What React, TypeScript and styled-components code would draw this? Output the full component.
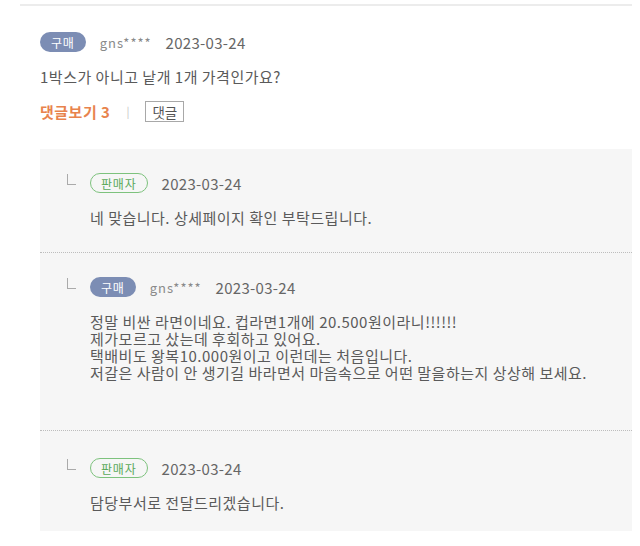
import React from 'react';
import styled, { createGlobalStyle } from 'styled-components';

const GlobalStyle = createGlobalStyle`
  body {
    margin: 0;
    background: #fff;
    font-family: "Noto Sans CJK KR", "Noto Sans", sans-serif;
    color: #555;
  }
`;

type Reply = {
  role: 'buyer' | 'seller';
  name?: string;
  date: string;
  lines: string[];
  pt: number;
  pb: number;
};

const replies: Reply[] = [
  {
    role: 'seller',
    date: '2023-03-24',
    lines: ['네 맞습니다. 상세페이지 확인 부탁드립니다.'],
    pt: 24,
    pb: 26,
  },
  {
    role: 'buyer',
    name: 'gns****',
    date: '2023-03-24',
    lines: [
      '정말 비싼 라면이네요. 컵라면1개에 20.500원이라니!!!!!!',
      '제가모르고 샀는데 후회하고 있어요.',
      '택배비도 왕복10.000원이고 이런데는 처음입니다.',
      '저갈은 사람이 안 생기길 바라면서 마음속으로 어떤 말을하는지 상상해 보세요.',
    ],
    pt: 24,
    pb: 49,
  },
  {
    role: 'seller',
    date: '2023-03-24',
    lines: ['담당부서로 전달드리겠습니다.'],
    pt: 27,
    pb: 20,
  },
];

export default function App() {
  return (
    <>
      <GlobalStyle />
      <Page>
        <Comment>
          <Meta>
            <Badge $role="buyer">구매</Badge>
            <Name>gns****</Name>
            <DateText>2023-03-24</DateText>
          </Meta>
          <Body>1박스가 아니고 낱개 1개 가격인가요?</Body>
          <Actions>
            <ViewReplies>댓글보기 3</ViewReplies>
            <Bar>|</Bar>
            <ReplyButton>댓글</ReplyButton>
          </Actions>

          <Panel>
            {replies.map((r, i) => (
              <ReplyRow key={i} $pt={r.pt} $pb={r.pb}>
                <Corner />
                <div>
                  <Meta>
                    <Badge $role={r.role}>{r.role === 'buyer' ? '구매' : '판매자'}</Badge>
                    {r.name && <Name>{r.name}</Name>}
                    <DateText>{r.date}</DateText>
                  </Meta>
                  <Body>
                    {r.lines.map((l, j) => (
                      <div key={j}>{l}</div>
                    ))}
                  </Body>
                </div>
              </ReplyRow>
            ))}
          </Panel>
        </Comment>
      </Page>
    </>
  );
}

const Page = styled.div`
  padding: 4px 8px 0 20px;
`;

const Comment = styled.section`
  padding: 26px 0 0 20px;
  border-top: 2px solid #ececec;
`;

const Meta = styled.div`
  display: flex;
  align-items: center;
  gap: 14px;
  height: 20px;
`;

const Badge = styled.span<{ $role: 'buyer' | 'seller' }>`
  display: inline-flex;
  align-items: center;
  justify-content: center;
  box-sizing: border-box;
  height: 20px;
  padding: 0 ${p => (p.$role === 'buyer' ? '11px' : '10px')};
  border-radius: 10px;
  font-size: 12px;
  letter-spacing: 0.8px;
  background: ${p => (p.$role === 'buyer' ? '#7c8db4' : 'transparent')};
  color: ${p => (p.$role === 'buyer' ? '#fff' : '#5aa95a')};
  border: ${p => (p.$role === 'buyer' ? 'none' : '1.5px solid #7dc27d')};
`;

const Name = styled.span`
  font-size: 13px;
  letter-spacing: 1px;
  color: #8a8a8a;
`;

const DateText = styled.span`
  font-size: 15px;
  letter-spacing: 0.3px;
  color: #666;
`;

const Body = styled.div`
  margin-top: 16px;
  font-size: 15px;
  line-height: 17px;
  letter-spacing: 0.5px;
  color: #5a5a5a;
`;

const Actions = styled.div`
  display: flex;
  align-items: center;
  height: 20px;
  margin-top: 16px;
`;

const ViewReplies = styled.span`
  font-size: 15px;
  font-weight: 700;
  letter-spacing: 0.5px;
  color: #e8834d;
`;

const Bar = styled.span`
  margin: 0 16px;
  font-size: 11px;
  color: #c4c4c4;
`;

const ReplyButton = styled.button`
  height: 21px;
  padding: 0 6px;
  border: 1px solid #a8a8a8;
  background: #fff;
  font-family: inherit;
  font-size: 13.5px;
  color: #555;
`;

const Panel = styled.div`
  margin-top: 28px;
  background: #f6f6f6;
`;

const ReplyRow = styled.div<{ $pt: number; $pb: number }>`
  display: flex;
  gap: 14px;
  padding: ${p => p.$pt}px 20px ${p => p.$pb}px 27px;

  & + & {
    border-top: 1px dotted #bdbdbd;
  }
`;

const Corner = styled.span`
  flex: none;
  width: 8px;
  height: 10px;
  margin-top: 1px;
  border-left: 1px solid #aaa;
  border-bottom: 1px solid #aaa;
`;
